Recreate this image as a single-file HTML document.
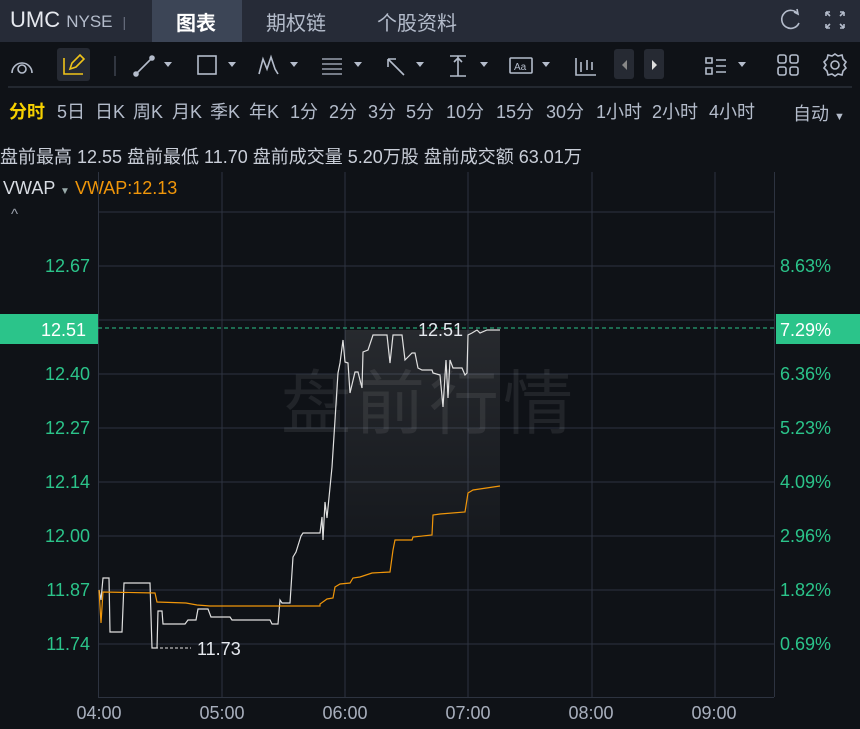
<!DOCTYPE html>
<html><head><meta charset="utf-8"><style>
*{margin:0;padding:0;box-sizing:border-box}
body{width:860px;height:729px;background:#0f1217;overflow:hidden;font-family:"Liberation Sans","Noto Sans CJK SC",sans-serif;position:relative;color:#c9ced8}
.a{position:absolute;white-space:nowrap}
.top{left:0;top:0;width:860px;height:42px;background:#262b37}
.p{position:absolute;top:98px;font-size:18px;color:#b4bccb;white-space:nowrap}
</style></head><body>
<div class="a top"></div>
<div class="a" style="left:152px;top:0;width:90px;height:42px;background:#3c4556"></div>
<div class="a" style="left:10px;top:7px;font-size:22px;color:#e6e9ef">UMC <span style="font-size:17px;color:#b4bccb">NYSE</span> <span style="font-size:14px;color:#6a7180">&nbsp;|</span></div>
<div class="a" style="left:176px;top:7px;font-size:20px;color:#fff;font-weight:bold">图表</div>
<div class="a" style="left:266px;top:7px;font-size:20px;color:#b4bccb">期权链</div>
<div class="a" style="left:377px;top:7px;font-size:20px;color:#b4bccb">个股资料</div>
<svg class="a" style="left:770px;top:4px" width="90" height="34" fill="none" stroke="#b4bccb" stroke-width="1.6">
<path d="M28 10 A9 9 0 1 0 29 19"/><path d="M24 8 L28 10 L27 5"/>
<path d="M56 8v4M56 8h4M56 8l4 4M74 8h-4M74 8v4M74 8l-4 4M56 24v-4M56 24h4M56 24l4-4M74 24h-4M74 24v-4M74 24l-4-4"/></svg>
<div class="a" style="left:57px;top:48px;width:33px;height:33px;background:#262a33;border-radius:3px"></div>
<div class="a" style="left:614px;top:49px;width:20px;height:30px;background:#262a33;border-radius:3px"></div>
<div class="a" style="left:644px;top:49px;width:20px;height:30px;background:#262a33;border-radius:3px"></div>
<svg class="a" style="left:0;top:42px" width="860" height="46" fill="none" stroke="#b4bccb" stroke-width="1.6">
<path d="M12 31 A10 10 0 0 1 32 31" /><circle cx="22" cy="27" r="4"/>
<path d="M64 16v16h19" stroke="#f0c419"/><path d="M70 27l2-6 8-8 4 4-8 8z" stroke="#f0c419"/>
<line x1="115" y1="14" x2="115" y2="34" stroke="#3a3f4a"/>
<path d="M136 32l16-16"/><circle cx="136" cy="32" r="2" fill="#b4bccb"/><circle cx="152" cy="16" r="2" fill="#b4bccb"/>
<rect x="198" y="14" width="18" height="18"/>
<path d="M259 32l4-15 4 10 4-12 4 12 3 5"/>
<path d="M322 17h20M322 22h20M322 27h20M322 32h20" stroke-width="1.2"/>
<path d="M404 33L388 17M388 17v8M388 17h8"/>
<path d="M450 14h16M450 34h16M458 14v20M454 20l4-4 4 4"/>
<rect x="510" y="16" width="22" height="15" rx="1"/>
<path d="M576 16v17h20M581 20v10M587 18v10M592 20v8"/>
<path d="M706 16h6v5h-6zM706 26h6v6h-6zM716 18h10M716 24h10M716 30h10"/>
<rect x="778" y="13" width="8" height="8" rx="2"/><rect x="790" y="13" width="8" height="8" rx="2"/><rect x="778" y="25" width="8" height="8" rx="2"/><rect x="790" y="25" width="8" height="8" rx="2"/>
<circle cx="835" cy="23" r="4"/><path d="M835 12l3 2 4-1 1 4 3 3-2 3 2 3-3 3-1 4-4-1-3 2-3-2-4 1-1-4-3-3 2-3-2-3 3-3 1-4 4 1z"/>
<g fill="#b4bccb" stroke="none"><path d="M164 20h8l-4 5zM228 20h8l-4 5zM290 20h8l-4 5zM354 20h8l-4 5zM416 20h8l-4 5zM480 20h8l-4 5zM542 20h8l-4 5zM738 20h8l-4 5z"/>
<path d="M627 18v10l-5-5z" fill="#888"/><path d="M652 18v10l5-5z" fill="#ddd"/></g>
<text x="514" y="28" font-size="10" fill="#b4bccb" stroke="none" font-family="Liberation Sans">Aa</text>
<line x1="8" y1="45" x2="852" y2="45" stroke="#2a2f38"/>
</svg>
<b class="p" style="left:9px;color:#f5d000">分时</b>
<span class="p" style="left:57px">5日</span><span class="p" style="left:95px">日K</span><span class="p" style="left:133px">周K</span><span class="p" style="left:172px">月K</span><span class="p" style="left:210px">季K</span><span class="p" style="left:249px">年K</span><span class="p" style="left:290px">1分</span><span class="p" style="left:329px">2分</span><span class="p" style="left:368px">3分</span><span class="p" style="left:406px">5分</span><span class="p" style="left:446px">10分</span><span class="p" style="left:496px">15分</span><span class="p" style="left:546px">30分</span><span class="p" style="left:596px">1小时</span><span class="p" style="left:652px">2小时</span><span class="p" style="left:709px">4小时</span>
<div class="a" style="left:793px;top:100px;font-size:18px;color:#b4bccb">自动 <span style="font-size:11px">▼</span></div>
<div class="a" style="left:0;top:143px;font-size:18px;color:#c9ced8">盘前最高 12.55 盘前最低 11.70 盘前成交量 5.20万股 盘前成交额 63.01万</div>
<div class="a" style="left:3px;top:178px;font-size:18px;color:#d8dce3">VWAP <span style="font-size:10px;color:#9aa">▼</span> <span style="color:#f0960a">VWAP:12.13</span></div>
<div class="a" style="left:11px;top:206px;font-size:15px;color:#9aa0ab">^</div>
<svg class="a" style="left:0;top:0" width="860" height="729">
<defs><linearGradient id="sh" x1="0" y1="0" x2="0" y2="1"><stop offset="0" stop-color="#fff" stop-opacity=".1"/><stop offset="1" stop-color="#fff" stop-opacity=".03"/></linearGradient></defs>
<g stroke="#2d3340" stroke-width="1">
<path d="M98 212H774M98 266H774M98 320H774M98 374H774M98 428H774M98 482H774M98 536H774M98 590H774M98 644H774"/>
<path d="M98.5 172V697M222 172V697M345 172V697M468 172V697M592 172V697M715 172V697M774.5 172V697M98 697.5H774"/></g>
<rect x="345" y="330" width="155" height="205" fill="url(#sh)"/>
<text x="429" y="428" text-anchor="middle" font-size="70" fill="#fff" fill-opacity=".08" font-family="Noto Sans CJK SC" letter-spacing="4">盘前行情</text>
<line x1="98" y1="328" x2="774" y2="328" stroke="#2bc48a" stroke-dasharray="4 3"/>
<polyline fill="none" stroke="#e0e0e0" stroke-width="1.2" points="99,590 101,600 103,578 109,578 110,632 122,632 124,583 150,583 152,648 157,648 158,611 162,611 163,624 185,624 188,620 196,620 198,609 208,609 211,617 230,617 232,620 270,620 272,624 278,624 280,600 282,603 290,603 293,557 296,552 301,536 303,533 320,533 322,517 323,540 325,502 327,518 332,467 338,373 340,363 343,340 345,362 348,363 350,393 355,372 358,372 362,388 363,352 368,350 373,335 387,335 390,363 393,335 402,335 405,360 412,353 415,353 418,368 422,370 432,370 433,373 440,375 443,407 446,360 448,398 450,360 453,368 462,368 465,375 467,373 468,335 472,333 477,330 480,333 487,330 500,330"/>
<polyline fill="none" stroke="#f0960a" stroke-width="1.2" points="99,590 101,623 103,592 155,593 157,602 186,603 197,605 210,606 320,606 320,604 327,599 333,598 335,587 340,584 350,583 353,578 360,577 372,573 390,572 393,550 395,540 412,540 413,537 432,535 433,515 440,514 465,512 468,493 473,490 500,486"/>
<path d="M155 648h36" stroke="#e0e0e0" stroke-dasharray="3 2"/>
<text x="197" y="655" font-size="18" fill="#e6e9ef" font-family="Liberation Sans">11.73</text>
<text x="418" y="336" font-size="18" fill="#e6e9ef" font-family="Liberation Sans">12.51</text>
<g font-size="18" fill="#2bc48a" font-family="Liberation Sans" text-anchor="end">
<text x="90" y="272">12.67</text><text x="90" y="380">12.40</text><text x="90" y="434">12.27</text><text x="90" y="488">12.14</text><text x="90" y="542">12.00</text><text x="90" y="596">11.87</text><text x="90" y="650">11.74</text></g>
<g font-size="18" fill="#2bc48a" font-family="Liberation Sans">
<text x="780" y="272">8.63%</text><text x="780" y="380">6.36%</text><text x="780" y="434">5.23%</text><text x="780" y="488">4.09%</text><text x="780" y="542">2.96%</text><text x="780" y="596">1.82%</text><text x="780" y="650">0.69%</text></g>
<rect x="0" y="314" width="98" height="30" fill="#2bc48a"/><text x="86" y="336" font-size="18" fill="#fff" text-anchor="end" font-family="Liberation Sans">12.51</text>
<rect x="776" y="314" width="84" height="30" fill="#2bc48a"/><text x="780" y="336" font-size="18" fill="#fff" font-family="Liberation Sans">7.29%</text>
<g font-size="18" fill="#a8afbd" font-family="Liberation Sans" text-anchor="middle">
<text x="99" y="719">04:00</text><text x="222" y="719">05:00</text><text x="345" y="719">06:00</text><text x="468" y="719">07:00</text><text x="591" y="719">08:00</text><text x="714" y="719">09:00</text></g>
</svg>
</body></html>
